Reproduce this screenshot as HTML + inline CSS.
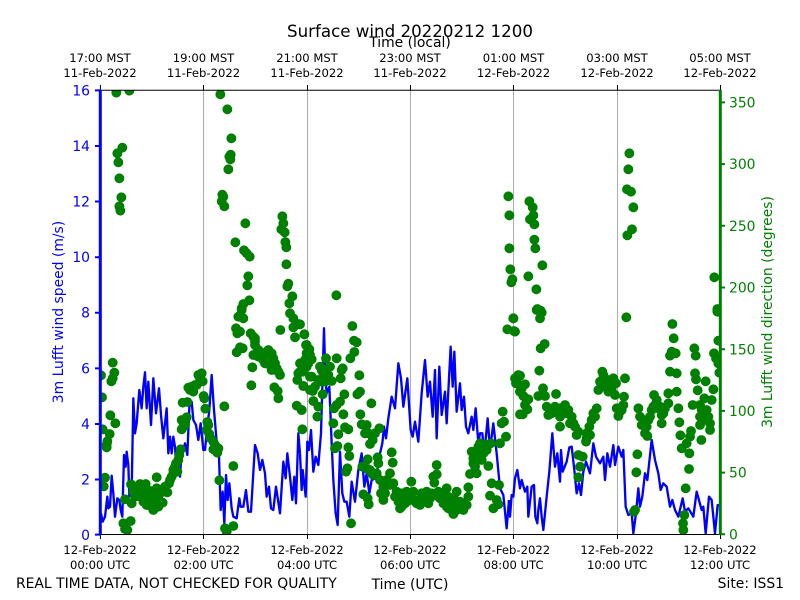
<!DOCTYPE html>
<html><head><meta charset="utf-8"><title>Surface wind</title>
<style>html,body{margin:0;padding:0;background:#fff;width:800px;height:600px;overflow:hidden}svg{display:block}text{font-family:"DejaVu Sans",sans-serif;fill:#000}.t{font-size:11.6px;text-anchor:middle}.b{fill:#00f;font-size:13.9px}.g{fill:#008000;font-size:13.9px}.d{fill:none;stroke:#008000;stroke-width:29.5;stroke-linecap:round}.l{fill:none;stroke:#00f;stroke-width:7;stroke-linejoin:round}</style></head>
<body>
<svg width="800" height="600" viewBox="0 0 800 600" xmlns="http://www.w3.org/2000/svg">
<defs><clipPath id="c"><rect x="100" y="90" width="620" height="444.5"/></clipPath></defs>
<rect width="800" height="600" fill="#fff"/>
<g stroke="#b0b0b0" stroke-width="1.1"><path d="M203.5 90V534M307.5 90V534M410.5 90V534M513.5 90V534M617.5 90V534"/></g>
<g clip-path="url(#c)">
<g transform="translate(90 310) scale(.33333)"><path class="l" d="M33 610 38 635 45 620 52 560 55 595 60 590 65 497 70 550 75 620 82 565 88 570 92 600 97 620 102 435 107 470 110 425 115 465 118 560 125 545 130 265 135 370 140 340 148 240 155 295 160 230 165 187 170 295 175 215 183 345 190 205 198 310 207 235 213 315 220 385 230 295 235 430 240 380 245 430 250 380 255 410 260 495 265 440 270 500 275 420 280 420 285 400 292 435 298 290 305 275 310 330 318 345 325 390 332 340 340 420 345 420 352 350 358 300 365 195 372 300 380 395 387 440 392 600 398 545 403 640 408 495 413 570 418 520 425 595 430 620 440 625 448 565 452 590 460 590 468 540 475 605 483 605 495 405 503 430 510 480 517 450 525 490 530 560 537 530 543 595 550 600 558 530 570 610 580 455 587 505 592 430 600 500 607 570 613 500 618 580 625 370 630 430"/></g>
<g transform="translate(300 310) scale(.33333)"><path class="l" d="M0 430 5 540 8 480 17 560 22 395 27 420 33 360 40 485 47 440 55 465 63 370 72 55 76 200 80 250 88 230 95 400 100 510 107 610 113 645 120 425 127 550 133 575 140 575 148 620 155 515 165 575 175 480 185 430 193 530 200 490 208 550 215 510 228 505 240 430 247 400 252 350 258 385 265 325 275 260 285 295 295 160 303 205 310 290 322 205 332 360 338 380 345 335 355 395 365 250 375 150 383 260 390 215 398 320 405 180 410 385 418 170 425 315 435 245 440 340 452 110 458 230 463 125 470 305 480 220 485 300 492 260 498 350 505 370 515 320 520 360 527 295 535 400 540 370 547 370 553 430 563 325 570 420 580 340 590 430 600 535 610 555 620 655 627 570"/></g>
<g transform="translate(510 310) scale(.33333)"><path class="l" d="M-3 570 0 620 5 555 10 560 15 505 22 480 30 535 35 510 45 545 52 530 55 620 60 575 65 530 72 525 76 620 82 640 85 600 90 565 95 620 100 660 110 560 118 485 127 370 135 470 142 430 150 515 153 420 158 485 170 455 178 412 185 410 193 480 200 550 207 520 213 555 220 485 228 455 240 490 250 400 258 440 270 460 280 440 285 510 292 430 300 470 310 405 315 465 325 410 335 440 340 420 347 590 355 615 365 610 370 670 378 610 385 535 390 590 397 560 405 490 412 510 425 390 435 450 445 490 452 540 460 520 470 530 480 590 487 570 495 600 505 620 518 565 525 605 535 595 550 620 560 545 575 600 580 590 587 670 597 560 605 570 615 670 623 585 628 585"/></g>
<g transform="translate(90 80) scale(.33333)"><path class="d" d="M79 38h.1M118 32h.1M391 43h.1M412 88h.1M424 175h.1M422 224h.1M418 230h.1M421 238h.1M415 268h.1M397 344h.1M400 350h.1M395 364h.1M403 379h.1M97 203h.1M82 220h.1M85 247h.1M88 295h.1M94 352h.1M88 379h.1M91 392h.1M466 430h.1M436 487h.1M462 511h.1M470 520h.1M479 530h.1M475 589h.1M472 616h.1M478 661h.1M460 672h.1M455 685h.1M577 409h.1M580 430h.1M574 448h.1M584 457h.1M586 486h.1M589 502h.1M589 553h.1M595 611h.1M592 619h.1M607 649h.1M598 670h.1"/></g>
<g transform="translate(300 80) scale(.33333)"><path class="d" d="M109 646h.1M625 349h.1M628 406h.1M628 505h.1M631 568h.1M637 598h.1M634 607h.1"/></g>
<g transform="translate(510 80) scale(.33333)"><path class="d" d="M358 220h.1M355 268h.1M351 328h.1M363 335h.1M370 382h.1M366 448h.1M352 466h.1M613 592h.1M622 687h.1M58 364h.1M68 382h.1M70 406h.1M60 418h.1M73 433h.1M73 479h.1M76 505h.1M97 556h.1M55 589h.1M79 628h.1M82 687h.1M92 692h.1"/></g>
<g transform="translate(90 310) scale(.33333)"><path class="d" d="M68 158h.1M73 188h.1M68 205h.1M64 214h.1M33 196h.1M36 262h.1M61 316h.1M76 340h.1M38 358h.1M59 372h.1M52 394h.1M50 404h.1M50 412h.1M45 503h.1M41 529h.1M100 640h.1M122 633h.1M105 657h.1M112 660h.1M105 568h.1M123 523h.1M125 580h.1M135 560h.1M150 522h.1M167 522h.1M145 548h.1M160 545h.1M175 540h.1M160 575h.1M185 590h.1M190 600h.1M200 502h.1M200 535h.1M180 560h.1M205 565h.1M218 578h.1M232 547h.1M237 520h.1M245 500h.1M250 480h.1M258 460h.1M262 485h.1M268 435h.1M272 418h.1M275 358h.1M275 330h.1M290 322h.1M285 345h.1M278 278h.1M292 276h.1M295 233h.1M310 245h.1M320 225h.1M325 195h.1M335 190h.1M338 214h.1M341 258h.1M343 265h.1M346 296h.1M352 336h.1M355 345h.1M358 372h.1M370 395h.1M385 415h.1M370 418h.1M382 428h.1M403 289h.1M430 468h.1M388 511h.1M405 655h.1M430 648h.1M410 665h.1M455 0h.1M445 20h.1M460 25h.1M438 55h.1M442 70h.1M450 65h.1M482 70h.1M495 85h.1M495 105h.1M450 112h.1M440 127h.1M458 115h.1M490 135h.1M505 120h.1M520 130h.1M535 120h.1M545 130h.1M550 145h.1M520 150h.1M535 155h.1M555 160h.1M560 175h.1M545 180h.1M570 195h.1M505 140h.1M487 172h.1M484 226h.1M553 232h.1M563 243h.1M565 265h.1M571 60h.1M600 10h.1M610 25h.1M625 42h.1M610 52h.1M615 82h.1M643 73h.1M650 105h.1M650 130h.1M630 160h.1M650 165h.1M625 190h.1M622 210h.1M640 228h.1M660 200h.1M660 240h.1M620 287h.1M635 300h.1M637 358h.1M130 545h.1M150 560h.1M165 565h.1M140 535h.1M175 555h.1M190 560h.1M195 575h.1M210 550h.1M220 545h.1M225 530h.1M205 590h.1M170 585h.1M240 510h.1M250 490h.1M255 470h.1M265 450h.1M300 240h.1M305 230h.1M315 225h.1M330 205h.1M285 335h.1M280 350h.1M350 360h.1M362 385h.1M375 405h.1M510 125h.1M515 135h.1M525 140h.1M530 130h.1M540 140h.1M540 165h.1M550 170h.1M525 160h.1M500 128h.1M565 185h.1M495 95h.1M490 80h.1M530 145h.1M545 160h.1M555 175h.1"/></g>
<g transform="translate(300 310) scale(.33333)"><path class="d" d="M0 43h.1M13 73h.1M18 105h.1M28 118h.1M20 130h.1M35 148h.1M25 160h.1M8 165h.1M15 175h.1M0 185h.1M35 200h.1M60 170h.1M78 145h.1M110 145h.1M90 170h.1M70 190h.1M85 195h.1M95 213h.1M125 180h.1M128 175h.1M122 205h.1M45 230h.1M38 243h.1M10 228h.1M68 253h.1M133 253h.1M120 275h.1M102 295h.1M110 285h.1M40 273h.1M55 290h.1M52 320h.1M5 300h.1M130 313h.1M100 340h.1M135 352h.1M145 358h.1M115 373h.1M112 408h.1M105 415h.1M145 412h.1M148 438h.1M142 475h.1M138 485h.1M153 640h.1M157 48h.1M162 92h.1M170 97h.1M163 126h.1M151 145h.1M178 196h.1M180 245h.1M172 253h.1M214 280h.1M181 313h.1M185 343h.1M200 345h.1M195 370h.1M238 355h.1M225 370h.1M218 390h.1M210 402h.1M203 448h.1M187 470h.1M233 442h.1M235 460h.1M210 480h.1M220 495h.1M240 510h.1M275 427h.1M278 458h.1M270 490h.1M190 553h.1M203 565h.1M206 583h.1M243 550h.1M255 550h.1M250 570h.1M265 520h.1M280 520h.1M290 545h.1M305 550h.1M320 545h.1M340 545h.1M295 575h.1M300 595h.1M315 580h.1M330 570h.1M350 580h.1M360 585h.1M385 580h.1M380 545h.1M395 550h.1M415 545h.1M440 535h.1M435 555h.1M470 545h.1M430 580h.1M445 595h.1M460 612h.1M475 590h.1M490 600h.1M500 585h.1M505 560h.1M505 532h.1M334 515h.1M410 465h.1M400 500h.1M410 493h.1M403 518h.1M510 492h.1M530 490h.1M520 460h.1M515 425h.1M520 445h.1M540 400h.1M555 405h.1M572 400h.1M550 430h.1M565 468h.1M545 450h.1M600 400h.1M618 380h.1M605 340h.1M612 335h.1M608 305h.1M575 520h.1M597 525h.1M570 557h.1M590 570h.1M595 583h.1M580 595h.1M660 313h.1M640 25h.1M622 58h.1M645 65h.1M647 205h.1M650 220h.1M660 245h.1M655 195h.1M285 560h.1M295 555h.1M300 570h.1M310 560h.1M325 555h.1M335 560h.1M345 570h.1M320 575h.1M305 590h.1M365 550h.1M370 570h.1M375 560h.1M390 565h.1M400 555h.1M425 550h.1M420 565h.1M445 560h.1M450 575h.1M460 590h.1M465 570h.1M480 575h.1M490 580h.1M440 590h.1M455 600h.1M470 600h.1M260 510h.1M250 530h.1M270 525h.1M230 490h.1M215 490h.1M200 475h.1M530 440h.1M540 430h.1M535 410h.1M560 420h.1M525 470h.1M55 210h.1M65 215h.1M75 215h.1M80 190h.1M65 180h.1M15 150h.1M30 135h.1M20 170h.1M10 185h.1M205 370h.1"/></g>
<g transform="translate(510 310) scale(.33333)"><path class="d" d="M10 25h.1M12 63h.1M80 0h.1M95 8h.1M90 25h.1M104 102h.1M92 115h.1M88 182h.1M99 235h.1M85 258h.1M105 258h.1M30 197h.1M15 205h.1M18 220h.1M45 223h.1M30 245h.1M40 258h.1M55 268h.1M45 285h.1M52 298h.1M38 313h.1M138 252h.1M110 290h.1M115 315h.1M130 300h.1M145 300h.1M165 285h.1M175 300h.1M150 320h.1M150 350h.1M185 320h.1M180 340h.1M195 350h.1M200 375h.1M228 395h.1M240 375h.1M238 350h.1M245 330h.1M260 295h.1M255 320h.1M277 185h.1M270 215h.1M265 240h.1M285 210h.1M300 225h.1M310 205h.1M318 220h.1M295 245h.1M315 255h.1M345 205h.1M342 260h.1M340 285h.1M320 295h.1M325 318h.1M335 300h.1M205 435h.1M218 440h.1M210 470h.1M205 502h.1M382 433h.1M379 487h.1M372 605h.1M375 600h.1M385 295h.1M390 320h.1M400 330h.1M395 345h.1M410 350h.1M405 370h.1M412 378h.1M420 320h.1M430 290h.1M432 255h.1M440 270h.1M445 295h.1M455 340h.1M460 310h.1M475 280h.1M475 250h.1M500 245h.1M505 295h.1M508 337h.1M511 376h.1M543 363h.1M540 380h.1M530 400h.1M515 415h.1M538 430h.1M537 477h.1M527 535h.1M523 615h.1M519 640h.1M520 660h.1M487 42h.1M491 85h.1M485 125h.1M497 130h.1M480 137h.1M480 185h.1M500 190h.1M553 115h.1M557 137h.1M555 190h.1M558 208h.1M587 214h.1M563 241h.1M610 238h.1M583 265h.1M605 270h.1M548 285h.1M570 285h.1M590 300h.1M570 320h.1M595 320h.1M570 345h.1M600 340h.1M600 360h.1M574 390h.1M622 5h.1M625 92h.1M612 130h.1M618 145h.1M625 160h.1M628 188h.1M349 22h.1M120 300h.1M125 310h.1M135 290h.1M150 295h.1M155 305h.1M160 300h.1M170 310h.1M190 340h.1M205 365h.1M230 370h.1M250 310h.1M285 225h.1M275 230h.1M300 215h.1M295 210h.1M280 195h.1M305 240h.1M330 305h.1M400 345h.1M405 350h.1M415 330h.1M425 300h.1M435 285h.1M450 290h.1M455 315h.1M465 295h.1M20 215h.1M35 235h.1M50 270h.1M575 300h.1M585 310h.1M590 330h.1M230 385h.1"/></g>
</g>
<path d="M100 90.3H720M100 534.5H720" stroke="#000" stroke-width="1"/>
<path d="M100.4 90V85M203.5 90V85M307.5 90V85M410.5 90V85M513.5 90V85M617.5 90V85M720.5 90V85M100.4 534V539M203.5 534V539M307.5 534V539M410.5 534V539M513.5 534V539M617.5 534V539M720.5 534V539" stroke="#000" stroke-width="1"/>
<path d="M100.3 90V535" stroke="#00f" stroke-width="3"/>
<path d="M720.3 90V535" stroke="#008000" stroke-width="3"/>
<path d="M95 90.4H100M95 146H100M95 201.5H100M95 257.2H100M95 312.7H100M95 368.4H100M95 424H100M95 479.5H100M95 534.6H100" stroke="#00f" stroke-width="2"/>
<path d="M720 102.4H725M720 164.1H725M720 225.8H725M720 287.5H725M720 349.2H725M720 410.9H725M720 472.6H725M720 534.3H725" stroke="#008000" stroke-width="2"/>
<text x="410" y="37" text-anchor="middle" style="font-size:16.67px">Surface wind 20220212 1200</text>
<text x="410" y="47" text-anchor="middle" style="font-size:13.9px">Time (local)</text>
<g class="x">
<text class="t" x="100" y="62">17:00 MST</text><text class="t" x="100" y="77">11-Feb-2022</text>
<text class="t" x="203.5" y="62">19:00 MST</text><text class="t" x="203.5" y="77">11-Feb-2022</text>
<text class="t" x="307" y="62">21:00 MST</text><text class="t" x="307" y="77">11-Feb-2022</text>
<text class="t" x="410" y="62">23:00 MST</text><text class="t" x="410" y="77">11-Feb-2022</text>
<text class="t" x="513.5" y="62">01:00 MST</text><text class="t" x="513.5" y="77">12-Feb-2022</text>
<text class="t" x="617" y="62">03:00 MST</text><text class="t" x="617" y="77">12-Feb-2022</text>
<text class="t" x="720" y="62">05:00 MST</text><text class="t" x="720" y="77">12-Feb-2022</text>
<text class="t" x="100" y="554">12-Feb-2022</text><text class="t" x="100" y="569">00:00 UTC</text>
<text class="t" x="203.5" y="554">12-Feb-2022</text><text class="t" x="203.5" y="569">02:00 UTC</text>
<text class="t" x="307" y="554">12-Feb-2022</text><text class="t" x="307" y="569">04:00 UTC</text>
<text class="t" x="410" y="554">12-Feb-2022</text><text class="t" x="410" y="569">06:00 UTC</text>
<text class="t" x="513.5" y="554">12-Feb-2022</text><text class="t" x="513.5" y="569">08:00 UTC</text>
<text class="t" x="617" y="554">12-Feb-2022</text><text class="t" x="617" y="569">10:00 UTC</text>
<text class="t" x="720" y="554">12-Feb-2022</text><text class="t" x="720" y="569">12:00 UTC</text>
</g>
<g text-anchor="end">
<text class="b" x="90" y="95.5">16</text><text class="b" x="90" y="151">14</text><text class="b" x="90" y="206.5">12</text><text class="b" x="90" y="262.2">10</text><text class="b" x="90" y="317.7">8</text><text class="b" x="90" y="373.4">6</text><text class="b" x="90" y="429">4</text><text class="b" x="90" y="484.5">2</text><text class="b" x="90" y="540">0</text>
</g>
<g>
<text class="g" x="729" y="107.5">350</text><text class="g" x="729" y="169.2">300</text><text class="g" x="729" y="230.9">250</text><text class="g" x="729" y="292.6">200</text><text class="g" x="729" y="354.3">150</text><text class="g" x="729" y="416">100</text><text class="g" x="729" y="477.7">50</text><text class="g" x="729" y="539.4">0</text>
</g>
<text class="b" transform="translate(63 312) rotate(-90)" text-anchor="middle">3m Lufft wind speed (m/s)</text>
<text class="g" transform="translate(772 312) rotate(-90)" text-anchor="middle">3m Lufft wind direction (degrees)</text>
<text x="16" y="588" style="font-size:13.9px">REAL TIME DATA, NOT CHECKED FOR QUALITY</text>
<text x="410" y="589" text-anchor="middle" style="font-size:13.9px">Time (UTC)</text>
<text x="784" y="588" text-anchor="end" style="font-size:13.9px">Site: ISS1</text>
</svg>
</body></html>
